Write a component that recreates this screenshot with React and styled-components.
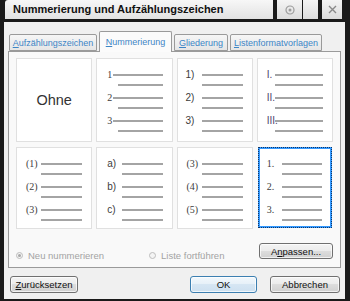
import React from "react";
import styled, { createGlobalStyle } from "styled-components";

const GlobalStyle = createGlobalStyle`
  body {
    margin: 0;
    font-family: "Liberation Sans", Arial, sans-serif;
  }
`;

const Window = styled.div`
  width: 350px;
  height: 301px;
  background: #1a1a1a;
  display: flex;
  flex-direction: column;
  box-sizing: border-box;
`;

const TitleBar = styled.div`
  height: 19px;
  display: flex;
  padding-left: 5px;
  padding-right: 8px;
`;

const TitleText = styled.div`
  flex: 1;
  background: linear-gradient(#f7f7f7, #e2e2e2);
  font-weight: bold;
  font-size: 11px;
  line-height: 19px;
  padding-left: 8px;
  color: #111;
  border-top-left-radius: 3px;
`;

const TitleButton = styled.div`
  width: ${props => props.w}px;
  margin-left: ${props => props.gap}px;
  background: linear-gradient(#f4f4f4, #dcdcdc);
  display: flex;
  align-items: center;
  justify-content: center;
`;

const Body = styled.div`
  flex: 1;
  margin: 3px 5px 2px 4px;
  background: #f0f0f0;
  display: flex;
  flex-direction: column;
`;

const TabRow = styled.div`
  display: flex;
  align-items: flex-end;
  gap: 2px;
  padding: 9px 0 0 5px;
  height: 20px;
  position: relative;
  z-index: 1;
`;

const Tab = styled.div`
  box-sizing: border-box;
  width: ${props => props.w}px;
  height: ${props => (props.active ? 21 : 17)}px;
  margin-bottom: ${props => (props.active ? -1 : 0)}px;
  border: 1px solid #9a9a9a;
  border-bottom: ${props => (props.active ? "none" : "1px solid #9a9a9a")};
  border-radius: 2px 2px 0 0;
  background: ${props =>
    props.active ? "#fbfbfb" : "linear-gradient(#f6f6f6, #e6e6e6)"};
  color: #3d85c6;
  font-size: 9px;
  display: flex;
  justify-content: center;
  align-items: center;
  padding-top: ${props => (props.active ? 0 : 1)}px;

  u {
    text-decoration: underline;
  }
`;

const Panel = styled.div`
  margin: 0 4px;
  border: 1px solid #9a9a9a;
  background: #f9f9f9;
  padding: 6px 7px 8px;
`;

const Grid = styled.div`
  display: grid;
  grid-template-columns: repeat(4, 1fr);
  grid-template-rows: 84px 82px;
  column-gap: 4px;
  row-gap: 5px;
`;

const Cell = styled.div`
  box-sizing: border-box;
  background: #fff;
  border: 1px solid ${props => (props.selected ? "#3399ff" : "#e0e0e0")};
  box-shadow: ${props =>
    props.selected ? "inset 0 0 0 1px #3399ff" : "none"};
  outline: ${props => (props.selected ? "1px dotted #0d3566" : "none")};
  outline-offset: -1px;
  margin: ${props => (props.selected ? "0 1px 1px 1px" : "0")};
  padding: 10px 9px 0 ${props => props.pl}px;
  display: flex;
  flex-direction: column;
`;

const NoneCell = styled(Cell)`
  align-items: center;
  justify-content: center;
  padding: 0;
  font-size: 14.5px;
  color: #333;
`;

const Item = styled.div`
  display: grid;
  grid-template-columns: ${props => props.lw}px 1fr;
  grid-template-rows: 12px 11px;
`;

const Label = styled.span`
  font-family: ${props =>
    props.serif
      ? '"Liberation Serif", "Times New Roman", serif'
      : '"Liberation Sans", Arial, sans-serif'};
  font-size: 10px;
  line-height: 12px;
  color: ${props => props.color || "#3c3c3c"};
  white-space: nowrap;
`;

const Line = styled.div`
  align-self: ${props => (props.second ? "start" : "center")};
  margin-top: ${props => (props.second ? 3 : 0)}px;
  margin-left: ${props => props.indent || 0}px;
  height: 2px;
  background: #a4a4a4;
  grid-column: 2;
`;

const Options = styled.div`
  display: flex;
  align-items: flex-end;
  margin-top: 14px;
  height: 16px;
`;

const Radio = styled.label`
  display: flex;
  align-items: center;
  gap: 5px;
  font-size: 9.5px;
  color: #a3a3a3;
  margin-right: ${props => props.mr || 0}px;
  margin-bottom: -2px;
`;

const RadioDot = styled.span`
  box-sizing: border-box;
  width: 7px;
  height: 7px;
  border-radius: 50%;
  border: 1px solid #bdbdbd;
  background: #f4f4f4;
  display: flex;
  align-items: center;
  justify-content: center;

  &::after {
    content: "";
    width: 3px;
    height: 3px;
    border-radius: 50%;
    background: ${props => (props.checked ? "#a8a8a8" : "transparent")};
  }
`;

const Button = styled.div`
  box-sizing: border-box;
  width: ${props => props.w}px;
  height: ${props => props.h || 17}px;
  border: 1px solid ${props => (props.focus ? "#3c7fb1" : "#707070")};
  border-radius: 3px;
  background: ${props =>
    props.focus
      ? "linear-gradient(#f2f8fc 0%, #e6f0f8 50%, #d6e6f3 50%, #cde0f0 100%)"
      : "linear-gradient(#f4f4f4 0%, #ebebeb 50%, #dddddd 50%, #d0d0d0 100%)"};
  box-shadow: inset 0 0 0 1px rgba(255, 255, 255, 0.7);
  font-size: 9.5px;
  color: #111;
  display: flex;
  align-items: center;
  justify-content: center;
  margin-left: ${props => (props.push ? "auto" : "0")};
  margin-right: ${props => props.mr || 0}px;
`;

const Footer = styled.div`
  display: flex;
  align-items: center;
  padding: 8px 5px 0 6px;
`;

const cells = [
  { none: true },
  { labels: ["1", "2", "3"], serif: true, pl: 10, lw: 6, indent: 5 },
  { labels: ["1)", "2)", "3)"], pl: 8, lw: 16 },
  { labels: ["I.", "II.", "III."], pl: 9, lw: 8, color: "#4d3f6b" },
  { labels: ["(1)", "(2)", "(3)"], serif: true, pl: 9, lw: 15 },
  { labels: ["a)", "b)", "c)"], pl: 10, lw: 15 },
  { labels: ["(3)", "(4)", "(5)"], serif: true, pl: 9, lw: 15 },
  { labels: ["1.", "2.", "3."], serif: true, pl: 8, lw: 15, selected: true }
];

const ListCell = ({ cell }) => (
  <Cell pl={cell.pl} selected={cell.selected}>
    {cell.labels.map(label => (
      <Item key={label} lw={cell.lw}>
        <Label serif={cell.serif} color={cell.color}>
          {label}
        </Label>
        <Line />
        <Line second indent={cell.indent} />
      </Item>
    ))}
  </Cell>
);

const App = () => (
  <>
    <GlobalStyle />
    <Window>
      <TitleBar>
        <TitleText>Nummerierung und Aufzählungszeichen</TitleText>
        <TitleButton w={25} gap={4}>
          <svg width="10" height="10" viewBox="0 0 10 10">
            <circle cx="5" cy="5" r="4" fill="none" stroke="#9c9c9c" strokeWidth="1.2" />
            <circle cx="5" cy="5" r="1.5" fill="#9c9c9c" />
          </svg>
        </TitleButton>
        <TitleButton w={15} gap={1} />
        <TitleButton w={20} gap={4}>
          <svg width="9" height="9" viewBox="0 0 9 9">
            <path d="M1 1L8 8M8 1L1 8" stroke="#8a8a8a" strokeWidth="1.4" />
          </svg>
        </TitleButton>
      </TitleBar>
      <Body>
        <TabRow>
          <Tab w={88}>
            <span>
              <u>A</u>ufzählungszeichen
            </span>
          </Tab>
          <Tab w={73} active>
            <span>
              <u>N</u>ummerierung
            </span>
          </Tab>
          <Tab w={54}>
            <span>
              <u>G</u>liederung
            </span>
          </Tab>
          <Tab w={92}>
            <span>
              <u>L</u>istenformatvorlagen
            </span>
          </Tab>
        </TabRow>
        <Panel>
          <Grid>
            {cells.map((cell, i) =>
              cell.none ? (
                <NoneCell key={i}>Ohne</NoneCell>
              ) : (
                <ListCell key={i} cell={cell} />
              )
            )}
          </Grid>
          <Options>
            <Radio mr={45}>
              <RadioDot checked />
              Neu nummerieren
            </Radio>
            <Radio>
              <RadioDot />
              Liste fortführen
            </Radio>
            <Button w={74} h={16} push>
              <span>
                A<u>n</u>passen...
              </span>
            </Button>
          </Options>
        </Panel>
        <Footer>
          <Button w={68}>
            <span>
              <u>Z</u>urücksetzen
            </span>
          </Button>
          <Button w={67} focus push mr={13}>
            OK
          </Button>
          <Button w={70}>Abbrechen</Button>
        </Footer>
      </Body>
    </Window>
  </>
);

export default App;
